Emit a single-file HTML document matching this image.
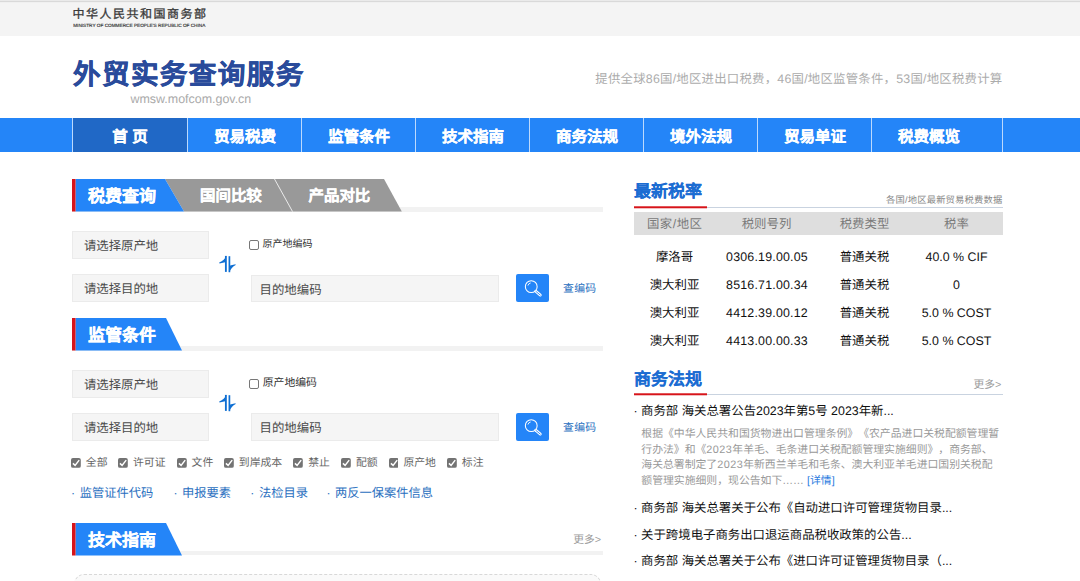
<!DOCTYPE html>
<html lang="zh-CN">
<head>
<meta charset="utf-8">
<title>外贸实务查询服务</title>
<style>
*{box-sizing:border-box;margin:0;padding:0}
html,body{width:1080px;height:581px;overflow:hidden;background:#fff}
body{font-family:"Liberation Sans",sans-serif;color:#333;position:relative;font-size:12.4px;text-rendering:geometricPrecision;text-spacing-trim:space-all}
.abs{position:absolute;white-space:nowrap}
a{text-decoration:none;color:inherit}

/* top bar */
#topbar{left:0;top:0;width:1080px;height:36px;background:linear-gradient(#eaeaea 0,#eaeaea 1px,#d9d9d9 1px,#d9d9d9 2px,#f0f0f0 2px,#f0f0f0 3px,#f4f4f4 3px)}
#mof-cn{left:72.5px;top:5.8px;font-size:12px;line-height:16px;letter-spacing:1.5px;color:#3a3a3a;-webkit-text-stroke:0.3px #3a3a3a}
#mof-en{left:73.2px;top:22.2px;font-size:4.72px;line-height:7px;color:#333;letter-spacing:0px;-webkit-text-stroke:0.15px #333}

/* logo */
#logo{left:72.9px;top:57.1px;font-size:27.6px;line-height:36px;font-weight:bold;color:#2a4b9b;letter-spacing:1.4px;-webkit-text-stroke:0.45px #2a4b9b}
#logo-url{left:130.5px;top:91px;font-size:12.45px;line-height:16px;color:#aaa}
#slogan{left:595.3px;top:70.8px;font-size:12.4px;line-height:16px;color:#acacac;letter-spacing:0.23px}

/* nav */
#nav{left:0;top:118px;width:1080px;height:34px;background:#2485f8}
.nv{top:118px;height:34px;width:115px;border-left:1px solid #bcd9fd;color:#fff;font-size:15.5px;font-weight:bold;line-height:39.8px;text-align:center;-webkit-text-stroke:0.25px #fff}
.nv.on{background:#2068c6}

/* section headers */
.sh-line{height:4.5px;background:#f2f2f2}
.sh-txt{color:#fff;font-weight:bold;font-size:17px;line-height:24px;margin-top:1.2px;-webkit-text-stroke:0.3px #fff}
.sh-txt2{color:#fff;font-weight:bold;font-size:15.45px;line-height:24px;margin-top:0.9px;-webkit-text-stroke:0.3px #fff}
.more{font-size:10.8px;color:#999;line-height:14px}

/* form */
.sel{height:28px;width:136.5px;background:#f5f5f5;border:1px solid #ebebeb;font-size:12.4px;line-height:29.6px;padding-left:10.9px;color:#4a4a4a;overflow:hidden}
.inp{height:28px;width:248px;background:#f5f5f5;border:1px solid #ebebeb;font-size:12.4px;line-height:29px;padding-left:7.6px;color:#4a4a4a;overflow:hidden}
.cbx{width:10px;height:10px;border:1px solid #777;border-radius:2px;background:#fff}
.cbl{font-size:10px;line-height:12px;color:#333}
.btn{width:32.5px;height:28px;background:#2485f8;border-radius:2px}
.qcode{font-size:10.85px;line-height:14px;color:#2a6fc0;letter-spacing:0.3px;margin-top:0.7px}
.ck{width:9.8px;height:9.8px}
.ckl{font-size:10.85px;line-height:14px;color:#666}
.lk{font-size:12.25px;line-height:16px;color:#2a6fc0;word-spacing:1.2px;margin-top:0.4px}

/* right */
.rt{font-size:17px;font-weight:bold;color:#1b6cd2;line-height:24px;margin-top:0.6px;-webkit-text-stroke:0.12px #1b6cd2}
.th{font-size:12.4px;color:#7a7a7a;line-height:23px;text-align:center;transform:translateX(-50%)}
.td{font-size:12.4px;color:#111;line-height:20px;text-align:center;transform:translateX(-50%)}
.td.n{letter-spacing:0.2px;margin-left:0.5px}
.nw{font-size:12.4px;color:#111;line-height:16px}
.desc{font-size:10.85px;color:#999;line-height:15.4px;white-space:normal;margin-top:0.7px}
.desc i{font-style:normal;letter-spacing:0.45px}
</style>
</head>
<body>

<!-- top bar -->
<div id="topbar" class="abs"></div>
<div id="mof-cn" class="abs">中华人民共和国商务部</div>
<div id="mof-en" class="abs">MINISTRY OF COMMERCE PEOPLE'S REPUBLIC OF CHINA</div>

<!-- logo -->
<div id="logo" class="abs">外贸实务查询服务</div>
<div id="logo-url" class="abs">wmsw.mofcom.gov.cn</div>
<div id="slogan" class="abs">提供全球86国/地区进出口税费，46国/地区监管条件，53国/地区税费计算</div>

<!-- nav -->
<div id="nav" class="abs"></div>
<div class="abs nv on" style="left:72px">首 页</div>
<div class="abs nv" style="left:187px">贸易税费</div>
<div class="abs nv" style="left:301px">监管条件</div>
<div class="abs nv" style="left:415px">技术指南</div>
<div class="abs nv" style="left:529px">商务法规</div>
<div class="abs nv" style="left:643px">境外法规</div>
<div class="abs nv" style="left:757px">贸易单证</div>
<div class="abs nv" style="left:871px">税费概览</div>
<div class="abs nv" style="left:1001.5px;width:2px"></div>

<!-- section 1 header -->
<div class="abs sh-line" style="left:72px;top:207.2px;width:531px"></div>
<svg class="abs" style="left:72px;top:179.2px" width="340" height="32.5" viewBox="0 0 340 32.5">
  <polygon points="93,0 312,0 329.8,32.5 112,32.5" fill="#999"/>
  <line x1="202.5" y1="0" x2="220.5" y2="32.5" stroke="#fff" stroke-width="0.8"/>
  <polygon points="3.5,0 93,0 112,32.5 3.5,32.5" fill="#2485f8"/>
  <rect x="0" y="0" width="3.5" height="32.5" fill="#d7141a"/>
</svg>
<div class="abs sh-txt" style="left:88px;top:184px">税费查询</div>
<div class="abs sh-txt2" style="left:200px;top:184.3px">国间比较</div>
<div class="abs sh-txt2" style="left:308.5px;top:184.3px">产品对比</div>

<!-- form 1 -->
<div class="abs sel" style="left:72px;top:231px">请选择原产地</div>
<div class="abs sel" style="left:72px;top:274.4px">请选择目的地</div>
<svg class="abs" style="left:210px;top:250px" width="40" height="30" viewBox="0 0 40 30"><g fill="#0f6fd3"><rect x="14.95" y="5.9" width="1.85" height="16"/><path d="M16.3 5.7Q14.6 10.2 9.2 12.6L9.5 13.4L15.2 12.2Z"/><rect x="18.55" y="6.2" width="1.7" height="16"/><path d="M20.1 15.5L25.5 14.3L25.7 15Q21.3 17.4 19.2 22.4Z"/></g></svg>
<div class="abs cbx" style="left:249px;top:240px"></div>
<div class="abs cbl" style="left:262.5px;top:238.5px">原产地编码</div>
<div class="abs inp" style="left:251px;top:274.6px;height:27.5px">目的地编码</div>
<div class="abs btn" style="left:516.3px;top:274.4px"><svg width="32.5" height="28" viewBox="-0.35 -0.55 32.5 28" style="display:block"><circle cx="14.9" cy="12.1" r="5.9" fill="none" stroke="#fff" stroke-width="1.05"/><path d="M19.3 16.6L24 20.6" stroke="#fff" stroke-width="2.7" stroke-linecap="round"/><path d="M19.6 16.9L23.9 20.5" stroke="#2485f8" stroke-width="0.9" stroke-linecap="round"/><path d="M11.6 11A3.6 3.6 0 0 1 14.3 8.4" fill="none" stroke="#fff" stroke-width="0.9"/></svg></div>
<div class="abs qcode" style="left:563px;top:281.5px">查编码</div>

<!-- section 2 header -->
<div class="abs sh-line" style="left:72px;top:346.2px;width:531px"></div>
<svg class="abs" style="left:72px;top:318.2px" width="120" height="32.5" viewBox="0 0 120 32.5">
  <polygon points="3.5,0 94,0 110,32.5 3.5,32.5" fill="#2485f8"/>
  <rect x="0" y="0" width="3.5" height="32.5" fill="#d7141a"/>
</svg>
<div class="abs sh-txt" style="left:88px;top:323px">监管条件</div>

<!-- form 2 -->
<div class="abs sel" style="left:72px;top:370px">请选择原产地</div>
<div class="abs sel" style="left:72px;top:413.3px">请选择目的地</div>
<svg class="abs" style="left:210px;top:388.9px" width="40" height="30" viewBox="0 0 40 30"><g fill="#0f6fd3"><rect x="14.95" y="5.9" width="1.85" height="16"/><path d="M16.3 5.7Q14.6 10.2 9.2 12.6L9.5 13.4L15.2 12.2Z"/><rect x="18.55" y="6.2" width="1.7" height="16"/><path d="M20.1 15.5L25.5 14.3L25.7 15Q21.3 17.4 19.2 22.4Z"/></g></svg>
<div class="abs cbx" style="left:249px;top:379px"></div>
<div class="abs cbl" style="left:262.7px;top:377.2px;font-size:10.85px">原产地编码</div>
<div class="abs inp" style="left:251px;top:413.2px">目的地编码</div>
<div class="abs btn" style="left:516.3px;top:413.3px"><svg width="32.5" height="28" viewBox="-0.35 -0.55 32.5 28" style="display:block"><circle cx="14.9" cy="12.1" r="5.9" fill="none" stroke="#fff" stroke-width="1.05"/><path d="M19.3 16.6L24 20.6" stroke="#fff" stroke-width="2.7" stroke-linecap="round"/><path d="M19.6 16.9L23.9 20.5" stroke="#2485f8" stroke-width="0.9" stroke-linecap="round"/><path d="M11.6 11A3.6 3.6 0 0 1 14.3 8.4" fill="none" stroke="#fff" stroke-width="0.9"/></svg></div>
<div class="abs qcode" style="left:563px;top:420.4px">查编码</div>

<!-- checks -->
<div id="checks">
<div class="abs ck" style="left:70.9px;top:457.8px"><svg width="9.8" height="9.8" viewBox="0 0 9.8 9.8" style="display:block"><rect width="9.8" height="9.8" rx="1.9" fill="#737373"/><path d="M1.9 5.4L4.1 7.4L8.2 2.1" fill="none" stroke="#fff" stroke-width="1.45"/></svg></div><div class="abs ckl" style="left:85.8px;top:455.6px">全部</div>
<div class="abs ck" style="left:118.3px;top:457.8px"><svg width="9.8" height="9.8" viewBox="0 0 9.8 9.8" style="display:block"><rect width="9.8" height="9.8" rx="1.9" fill="#737373"/><path d="M1.9 5.4L4.1 7.4L8.2 2.1" fill="none" stroke="#fff" stroke-width="1.45"/></svg></div><div class="abs ckl" style="left:133px;top:455.6px">许可证</div>
<div class="abs ck" style="left:176.8px;top:457.8px"><svg width="9.8" height="9.8" viewBox="0 0 9.8 9.8" style="display:block"><rect width="9.8" height="9.8" rx="1.9" fill="#737373"/><path d="M1.9 5.4L4.1 7.4L8.2 2.1" fill="none" stroke="#fff" stroke-width="1.45"/></svg></div><div class="abs ckl" style="left:191.6px;top:455.6px">文件</div>
<div class="abs ck" style="left:224.1px;top:457.8px"><svg width="9.8" height="9.8" viewBox="0 0 9.8 9.8" style="display:block"><rect width="9.8" height="9.8" rx="1.9" fill="#737373"/><path d="M1.9 5.4L4.1 7.4L8.2 2.1" fill="none" stroke="#fff" stroke-width="1.45"/></svg></div><div class="abs ckl" style="left:238.8px;top:455.6px">到岸成本</div>
<div class="abs ck" style="left:293px;top:457.8px"><svg width="9.8" height="9.8" viewBox="0 0 9.8 9.8" style="display:block"><rect width="9.8" height="9.8" rx="1.9" fill="#737373"/><path d="M1.9 5.4L4.1 7.4L8.2 2.1" fill="none" stroke="#fff" stroke-width="1.45"/></svg></div><div class="abs ckl" style="left:308.2px;top:455.6px">禁止</div>
<div class="abs ck" style="left:341.3px;top:457.8px"><svg width="9.8" height="9.8" viewBox="0 0 9.8 9.8" style="display:block"><rect width="9.8" height="9.8" rx="1.9" fill="#737373"/><path d="M1.9 5.4L4.1 7.4L8.2 2.1" fill="none" stroke="#fff" stroke-width="1.45"/></svg></div><div class="abs ckl" style="left:356px;top:455.6px">配额</div>
<div class="abs ck" style="left:388.6px;top:457.8px"><svg width="9.8" height="9.8" viewBox="0 0 9.8 9.8" style="display:block"><rect width="9.8" height="9.8" rx="1.9" fill="#737373"/><path d="M1.9 5.4L4.1 7.4L8.2 2.1" fill="none" stroke="#fff" stroke-width="1.45"/></svg></div><div class="abs ckl" style="left:403.4px;top:455.6px">原产地</div>
<div class="abs ck" style="left:446.9px;top:457.8px"><svg width="9.8" height="9.8" viewBox="0 0 9.8 9.8" style="display:block"><rect width="9.8" height="9.8" rx="1.9" fill="#737373"/><path d="M1.9 5.4L4.1 7.4L8.2 2.1" fill="none" stroke="#fff" stroke-width="1.45"/></svg></div><div class="abs ckl" style="left:461.8px;top:455.6px">标注</div>
</div>

<!-- links -->
<div class="abs lk" style="left:71px;top:484.2px">· 监管证件代码</div>
<div class="abs lk" style="left:173.4px;top:484.2px">· 申报要素</div>
<div class="abs lk" style="left:250.3px;top:484.2px">· 法检目录</div>
<div class="abs lk" style="left:326.4px;top:484.2px">· 两反一保案件信息</div>

<!-- section 3 header -->
<div class="abs sh-line" style="left:72px;top:551px;width:531px;height:4.2px"></div>
<svg class="abs" style="left:72px;top:523.1px" width="120" height="32.5" viewBox="0 0 120 32.5">
  <polygon points="3.5,0 94,0 110,32.5 3.5,32.5" fill="#2485f8"/>
  <rect x="0" y="0" width="3.5" height="32.5" fill="#d7141a"/>
</svg>
<div class="abs sh-txt" style="left:88px;top:527.4px">技术指南</div>
<div class="abs more" style="left:573.2px;top:533px">更多&gt;</div>
<div class="abs" style="left:74.2px;top:574.4px;width:527px;height:30px;border:1px dashed #d8d8d8;border-radius:10px;background:#fafafa"></div>

<!-- right: latest rates -->
<div class="abs rt" style="left:634px;top:179.5px">最新税率</div>
<div class="abs" style="left:634px;top:207px;width:368.5px;height:1px;background:#c9d3e0"></div>
<div class="abs" style="left:634px;top:206px;width:73px;height:3px;background:linear-gradient(#e2565a 0,#e2565a 1px,#d7141a 1px,#d7141a 2px,#f3bdbf 2px)"></div>
<div class="abs" style="left:886px;top:194px;font-size:9.3px;line-height:12px;color:#888;letter-spacing:0.18px;margin-top:-0.4px">各国/地区最新贸易税费数据</div>
<div class="abs" style="left:634px;top:211.7px;width:368.5px;height:23px;background:#dedede"></div>
<div class="abs th" style="left:674.7px;top:212.5px;letter-spacing:0.5px">国家/地区</div>
<div class="abs th" style="left:766.5px;top:212.5px">税则号列</div>
<div class="abs th" style="left:864.5px;top:212.5px">税费类型</div>
<div class="abs th" style="left:956.5px;top:212.5px">税率</div>

<div class="abs td" style="left:674.5px;top:247.3px">摩洛哥</div>
<div class="abs td n" style="left:766.5px;top:247.3px">0306.19.00.05</div>
<div class="abs td" style="left:864.5px;top:247.3px">普通关税</div>
<div class="abs td" style="left:956.5px;top:247.3px">40.0 % CIF</div>

<div class="abs td" style="left:674.5px;top:275.2px">澳大利亚</div>
<div class="abs td n" style="left:766.5px;top:275.2px">8516.71.00.34</div>
<div class="abs td" style="left:864.5px;top:275.2px">普通关税</div>
<div class="abs td" style="left:956.5px;top:275.2px">0</div>

<div class="abs td" style="left:674.5px;top:303px">澳大利亚</div>
<div class="abs td n" style="left:766.5px;top:303px">4412.39.00.12</div>
<div class="abs td" style="left:864.5px;top:303px">普通关税</div>
<div class="abs td" style="left:956.5px;top:303px">5.0 % COST</div>

<div class="abs td" style="left:674.5px;top:331.2px">澳大利亚</div>
<div class="abs td n" style="left:766.5px;top:331.2px">4413.00.00.33</div>
<div class="abs td" style="left:864.5px;top:331.2px">普通关税</div>
<div class="abs td" style="left:956.5px;top:331.2px">5.0 % COST</div>

<!-- right: laws -->
<div class="abs rt" style="left:634px;top:367.5px">商务法规</div>
<div class="abs" style="left:634px;top:394px;width:368.5px;height:1px;background:#c9d3e0"></div>
<div class="abs" style="left:634px;top:393px;width:73px;height:3px;background:linear-gradient(#e2565a 0,#e2565a 1px,#d7141a 1px,#d7141a 2px,#f3bdbf 2px)"></div>
<div class="abs more" style="left:973.5px;top:377.8px">更多&gt;</div>

<div class="abs nw" style="left:633.5px;top:403.3px">· 商务部 海关总署公告2023年第5号 2023年新...</div>
<div class="abs desc" style="left:641.3px;top:426.8px;width:364px">根据《中华人民共和国货物进出口管理条例》《农产品进口关税配额管理暂<br>行办法》和《<i>2023</i>年羊毛、毛条进口关税配额管理实施细则》，商务部、<br>海关总署制定了<i>2023</i>年新西兰羊毛和毛条、澳大利亚羊毛进口国别关税配<br>额管理实施细则，现公告如下…… <span style="color:#2a7be0">[详情]</span></div>
<div class="abs nw" style="left:633.5px;top:499.8px">· 商务部 海关总署关于公布《自动进口许可管理货物目录...</div>
<div class="abs nw" style="left:633.5px;top:526.6px">· 关于跨境电子商务出口退运商品税收政策的公告...</div>
<div class="abs nw" style="left:633.5px;top:553.4px">· 商务部 海关总署关于公布《进口许可证管理货物目录（...</div>

</body>
</html>
